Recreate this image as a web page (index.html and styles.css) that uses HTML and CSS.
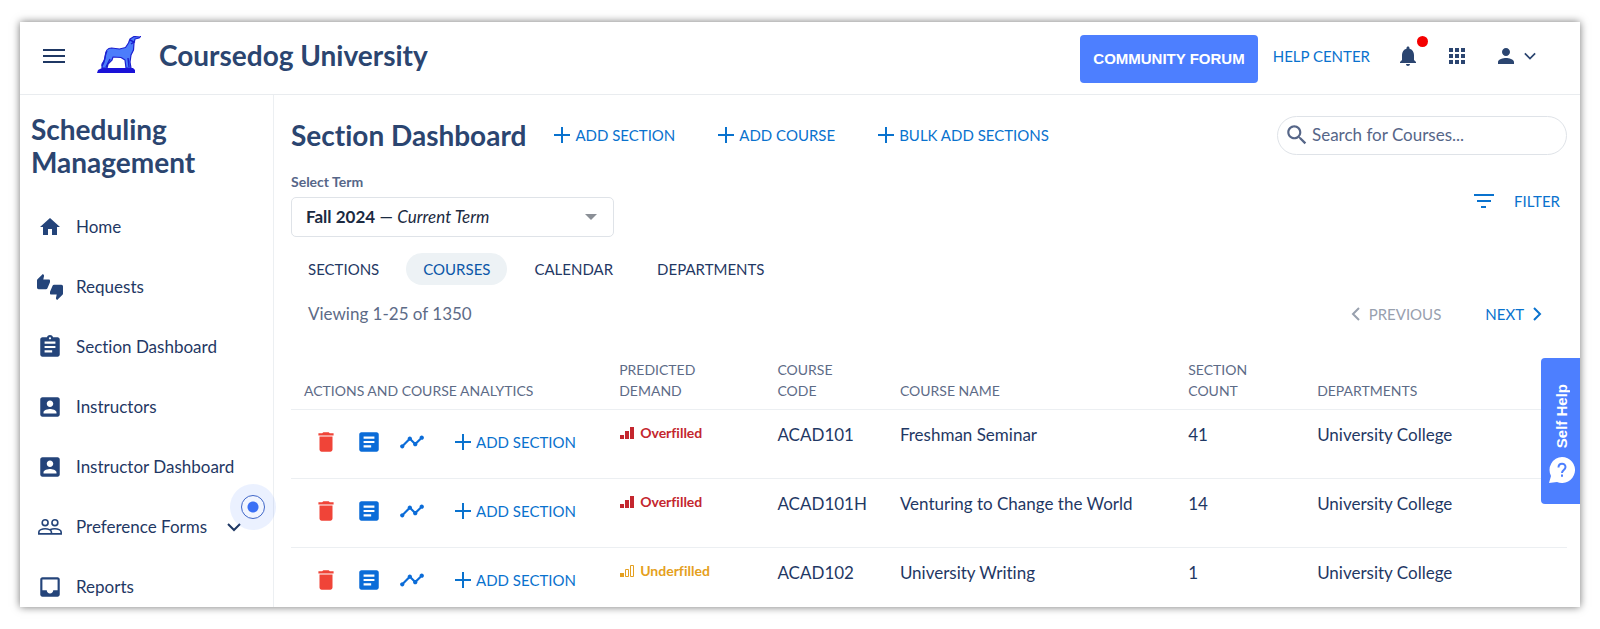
FILE: index.html
```html
<!DOCTYPE html>
<html lang="en">

<head>
    <meta charset="UTF-8">
    <meta name="viewport" content="width=device-width, initial-scale=1.0">
    <title>Coursedog University - Section Dashboard</title>
    <link rel="stylesheet" href="styles.css">
</head>

<body>
    <!-- Shared icons -->
    <svg class="sprite" aria-hidden="true">
        <symbol id="i-plus" viewBox="0 0 16 16"><path d="M8 0v16M0 8h16" fill="none" stroke="currentColor" stroke-width="2" /></symbol>
        <symbol id="i-down" viewBox="0 0 14 14"><path d="M1 4l6 6 6-6" fill="none" stroke="currentColor" stroke-width="2" /></symbol>
        <symbol id="i-trash" viewBox="0 0 24 24"><path d="M6 19c0 1.100.9 2 2 2h8c1.100 0 2-.9 2-2V7H6v12zM19 4h-3.500l-1-1h-5l-1 1H5v2h14V4z" /></symbol>
        <symbol id="i-article" viewBox="0 0 24 24"><path d="M19 3H5c-1.100 0-2 .9-2 2v14c0 1.100.9 2 2 2h14c1.100 0 2-.9 2-2V5c0-1.100-.9-2-2-2zm-5 14H7v-2h7v2zm3-4H7v-2h10v2zm0-4H7V7h10v2z" /></symbol>
        <symbol id="i-chart" viewBox="0 0 24 24"><path d="M23 8c0 1.100-.9 2-2 2-.18 0-.35-.02-.51-.07l-3.560 3.550c.05.16.07.34.07.52 0 1.100-.9 2-2 2s-2-.9-2-2c0-.18.02-.36.07-.52l-2.550-2.550c-.16.05-.34.07-.52.07s-.36-.02-.52-.07l-4.550 4.560c.05.16.07.33.07.51 0 1.100-.9 2-2 2s-2-.9-2-2 .9-2 2-2c.18 0 .35.02.51.07l4.560-4.550C8.020 9.360 8 9.180 8 9c0-1.100.9-2 2-2s2 .9 2 2c0 .18-.02.36-.07.52l2.550 2.550c.16-.05.34-.07.52-.07s.36.02.52.07l3.550-3.560C19.020 8.350 19 8.180 19 8c0-1.100.9-2 2-2s2 .9 2 2z" /></symbol>
        <symbol id="i-person-box" viewBox="0 0 24 24"><path d="M3 5v14c0 1.100.89 2 2 2h14c1.100 0 2-.9 2-2V5c0-1.100-.9-2-2-2H5c-1.110 0-2 .9-2 2zm12 4c0 1.660-1.340 3-3 3s-3-1.340-3-3 1.340-3 3-3 3 1.340 3 3zm-9 8c0-2 4-3.100 6-3.100s6 1.100 6 3.100v1H6v-1z" /></symbol>
        <symbol id="i-bars" viewBox="0 0 15 13"><path d="M0 8h4v4H0zM5 4h4v8H5zM10 0h4v12h-4z" /></symbol>
        <symbol id="i-bars-low" viewBox="0 0 15 13"><path d="M0 8h4v4H0z" /><path d="M5.500 4.500h3v7h-3zM10.500.5h3v11h-3z" fill="none" stroke="currentColor" /></symbol>
    </svg>

    <div class="window">
        <header class="topbar">
            <button class="icon-btn menu-btn" aria-label="Menu">
                <svg width="22" height="16" viewBox="0 0 22 16"><path d="M0 2h22M0 8h22M0 14h22" fill="none" stroke="currentColor" stroke-width="2" /></svg>
            </button>
            <svg class="logo" width="44" height="38" viewBox="0 0 44 38" aria-hidden="true">
                <path d="M0 37l1-3 4-2h31l2 2v3z" fill="#1a12d8" />
                <path d="M43 1l-6-.500-4 2.500-1.500 4-3 4.500-6 1.500-8-1c-4 0-6 3-6 7l-1 5-2.500 4L5 32h5l1-4 4-4 1-3 8 .500 4 2.500 1 8h5l-1-6 1-7 2.500-5 .500-7 1-4 4-1 2-2z" fill="#4c7dfb" stroke="#1c1fd0" stroke-width="1.200" stroke-linejoin="round" />
                <path d="M10 15c-3 5-1 9-5 15M13 23l-4 8M31 22l1 9M33 4l4 2-3 2" fill="none" stroke="#1c1fd0" stroke-width="1.400" />
            </svg>
            <div class="brand">Coursedog University</div>
            <div class="topbar-right">
                <button class="forum-btn">COMMUNITY FORUM</button>
                <a class="help-link" href="#">HELP CENTER</a>
                <button class="icon-btn bell" aria-label="Notifications">
                    <svg width="24" height="24" viewBox="0 0 24 24"><path d="M12 22c1.100 0 2-.9 2-2h-4c0 1.100.89 2 2 2zm6-6v-5c0-3.070-1.640-5.640-4.500-6.320V4c0-.83-.67-1.500-1.500-1.500s-1.500.67-1.500 1.500v.68C7.630 5.360 6 7.920 6 11v5l-2 2v1h16v-1l-2-2z" /></svg>
                    <span class="dot"></span>
                </button>
                <button class="icon-btn" aria-label="Apps">
                    <svg width="24" height="24" viewBox="0 0 24 24"><path d="M4 8h4V4H4v4zm6 12h4v-4h-4v4zm-6 0h4v-4H4v4zm0-6h4v-4H4v4zm6 0h4v-4h-4v4zm6-10v4h4V4h-4zm-6 4h4V4h-4v4zm6 6h4v-4h-4v4zm0 6h4v-4h-4v4z" /></svg>
                </button>
                <button class="icon-btn account" aria-label="Account">
                    <svg width="24" height="24" viewBox="0 0 24 24"><path d="M12 12c2.210 0 4-1.790 4-4s-1.790-4-4-4-4 1.790-4 4 1.790 4 4 4zm0 2c-2.670 0-8 1.340-8 4v2h16v-2c0-2.660-5.330-4-8-4z" /></svg>
                    <svg width="12" height="12"><use href="#i-down" /></svg>
                </button>
            </div>
        </header>

        <div class="layout">
            <nav class="sidebar">
                <h2>Scheduling Management</h2>
                <ul>
                    <li><a href="#"><svg width="24" height="24" viewBox="0 0 24 24"><path d="M10 20v-6h4v6h5v-8h3L12 3 2 12h3v8z" /></svg>Home</a></li>
                    <li><a href="#"><svg width="26" height="26" viewBox="0 0 24 24"><path d="M12 6c0-.550-.450-1-1-1H5.820l.660-3.180.020-.230c0-.310-.130-.590-.330-.8L5.380 0 .440 4.940C.170 5.210 0 5.590 0 6v6.500c0 .830.670 1.500 1.500 1.500h6.750c.620 0 1.150-.380 1.380-.910l2.260-5.290c.070-.170.110-.360.110-.550V6zm10.500 4h-6.750c-.620 0-1.150.380-1.380.910l-2.260 5.290c-.070.170-.110.360-.110.550V18c0 .550.450 1 1 1h5.180l-.660 3.180-.020.240c0 .310.130.590.330.8l.790.780 4.940-4.940c.270-.270.440-.650.440-1.060v-6.500c0-.830-.670-1.500-1.500-1.500z" /></svg>Requests</a></li>
                    <li><a href="#"><svg width="26" height="26" viewBox="0 0 24 24"><path d="M19 3h-4.180C14.400 1.840 13.300 1 12 1c-1.300 0-2.400.84-2.820 2H5c-1.100 0-2 .9-2 2v14c0 1.100.9 2 2 2h14c1.100 0 2-.9 2-2V5c0-1.100-.9-2-2-2zm-7 0c.55 0 1 .45 1 1s-.45 1-1 1-1-.45-1-1 .45-1 1-1zm2 14H7v-2h7v2zm3-4H7v-2h10v2zm0-4H7V7h10v2z" /></svg>Section Dashboard</a></li>
                    <li><a href="#"><svg width="26" height="26"><use href="#i-person-box" /></svg>Instructors</a></li>
                    <li><a href="#"><svg width="26" height="26"><use href="#i-person-box" /></svg>Instructor Dashboard</a></li>
                    <li>
                        <a href="#"><svg width="26" height="26" viewBox="0 0 24 24"><g fill="none" stroke="currentColor" stroke-width="1.500"><circle cx="7.500" cy="8" r="2.700" /><circle cx="16.500" cy="8" r="2.700" /><path d="M1.700 18.300v-1.800c0-1.700 3-2.900 5.800-2.900s5.800 1.200 5.800 2.900v1.800zM12 14.600c1.300-.700 3-1 4.500-1 2.800 0 5.800 1.200 5.800 2.900v1.800h-9" /></g></svg>Preference Forms<svg class="caret" width="14" height="14"><use href="#i-down" /></svg></a>
                        <span class="beacon"></span>
                    </li>
                    <li><a href="#"><svg width="26" height="26" viewBox="0 0 24 24"><path d="M19 3H4.990c-1.110 0-1.980.89-1.980 2L3 19c0 1.100.88 2 1.990 2H19c1.100 0 2-.9 2-2V5c0-1.110-.9-2-2-2zm0 12h-4c0 1.660-1.350 3-3 3s-3-1.340-3-3H4.990V5H19v10z" /></svg>Reports</a></li>
                </ul>
            </nav>

            <main class="content">
                <div class="title-row">
                    <h1>Section Dashboard</h1>
                    <button class="link-btn"><svg width="16" height="16"><use href="#i-plus" /></svg>ADD SECTION</button>
                    <button class="link-btn"><svg width="16" height="16"><use href="#i-plus" /></svg>ADD COURSE</button>
                    <button class="link-btn"><svg width="16" height="16"><use href="#i-plus" /></svg>BULK ADD SECTIONS</button>
                    <label class="search">
                        <svg width="26" height="26" viewBox="0 0 24 24"><path d="M15.500 14h-.79l-.28-.27C15.410 12.590 16 11.110 16 9.500 16 5.910 13.090 3 9.500 3S3 5.910 3 9.500 5.910 16 9.500 16c1.610 0 3.090-.59 4.230-1.570l.27.28v.79l5 4.990L20.490 19l-4.990-5zm-6 0C7.010 14 5 11.990 5 9.500S7.010 5 9.500 5 14 7.010 14 9.500 11.990 14 9.500 14z" /></svg>
                        <input type="search" placeholder="Search for Courses..." aria-label="Search for Courses">
                    </label>
                </div>

                <div class="term-row">
                    <div class="term">
                        <label for="term">Select Term</label>
                        <div class="term-select">
                            <select id="term">
                                <option>Fall 2024 — Current Term</option>
                            </select>
                            <span class="term-value" aria-hidden="true"><b>Fall 2024</b> — <i>Current Term</i></span>
                        </div>
                    </div>
                    <button class="link-btn filter-btn"><svg width="20" height="14" viewBox="0 0 20 14"><path d="M0 1h20M3 7h14M7 13h5" fill="none" stroke="currentColor" stroke-width="2" /></svg>FILTER</button>
                </div>

                <div class="tabs">
                    <button class="tab">SECTIONS</button>
                    <button class="tab active">COURSES</button>
                    <button class="tab">CALENDAR</button>
                    <button class="tab">DEPARTMENTS</button>
                </div>

                <div class="pager">
                    <span>Viewing 1-25 of 1350</span>
                    <div class="pager-btns">
                        <button class="link-btn" disabled><svg width="9" height="14" viewBox="0 0 9 14"><path d="M8 1L2 7l6 6" fill="none" stroke="currentColor" stroke-width="2" /></svg>PREVIOUS</button>
                        <button class="link-btn">NEXT<svg width="9" height="14" viewBox="0 0 9 14"><path d="M1 1l6 6-6 6" fill="none" stroke="currentColor" stroke-width="2" /></svg></button>
                    </div>
                </div>

                <table class="courses">
                    <thead>
                        <tr>
                            <th class="col-actions">ACTIONS AND COURSE ANALYTICS</th>
                            <th class="col-demand">PREDICTED<br>DEMAND</th>
                            <th class="col-code">COURSE<br>CODE</th>
                            <th class="col-name">COURSE NAME</th>
                            <th class="col-count">SECTION<br>COUNT</th>
                            <th>DEPARTMENTS</th>
                        </tr>
                    </thead>
                    <tbody>
                        <tr>
                            <td>
                                <div class="actions">
                                    <button class="icon-btn delete" aria-label="Delete"><svg width="26" height="26"><use href="#i-trash" /></svg></button>
                                    <button class="icon-btn" aria-label="Details"><svg width="26" height="26"><use href="#i-article" /></svg></button>
                                    <button class="icon-btn" aria-label="Analytics"><svg width="26" height="26"><use href="#i-chart" /></svg></button>
                                    <button class="link-btn"><svg width="16" height="16"><use href="#i-plus" /></svg>ADD SECTION</button>
                                </div>
                            </td>
                            <td><span class="demand over"><svg width="15" height="13"><use href="#i-bars" /></svg>Overfilled</span></td>
                            <td>ACAD101</td>
                            <td>Freshman Seminar</td>
                            <td>41</td>
                            <td>University College</td>
                        </tr>
                        <tr>
                            <td>
                                <div class="actions">
                                    <button class="icon-btn delete" aria-label="Delete"><svg width="26" height="26"><use href="#i-trash" /></svg></button>
                                    <button class="icon-btn" aria-label="Details"><svg width="26" height="26"><use href="#i-article" /></svg></button>
                                    <button class="icon-btn" aria-label="Analytics"><svg width="26" height="26"><use href="#i-chart" /></svg></button>
                                    <button class="link-btn"><svg width="16" height="16"><use href="#i-plus" /></svg>ADD SECTION</button>
                                </div>
                            </td>
                            <td><span class="demand over"><svg width="15" height="13"><use href="#i-bars" /></svg>Overfilled</span></td>
                            <td>ACAD101H</td>
                            <td>Venturing to Change the World</td>
                            <td>14</td>
                            <td>University College</td>
                        </tr>
                        <tr>
                            <td>
                                <div class="actions">
                                    <button class="icon-btn delete" aria-label="Delete"><svg width="26" height="26"><use href="#i-trash" /></svg></button>
                                    <button class="icon-btn" aria-label="Details"><svg width="26" height="26"><use href="#i-article" /></svg></button>
                                    <button class="icon-btn" aria-label="Analytics"><svg width="26" height="26"><use href="#i-chart" /></svg></button>
                                    <button class="link-btn"><svg width="16" height="16"><use href="#i-plus" /></svg>ADD SECTION</button>
                                </div>
                            </td>
                            <td><span class="demand under"><svg width="15" height="13"><use href="#i-bars-low" /></svg>Underfilled</span></td>
                            <td>ACAD102</td>
                            <td>University Writing</td>
                            <td>1</td>
                            <td>University College</td>
                        </tr>
                    </tbody>
                </table>
            </main>
        </div>

        <button class="self-help">
            <svg width="26" height="26" viewBox="0 0 26 26"><path d="M13 0a13 13 0 1 1-5 25L0 26l2-7A13 13 0 0 1 13 0z" fill="#fff" /><path d="M9.500 10.500c0-5 7-5 7-.500 0 3-3.500 3-3.500 6M13 17.500v2.200" fill="none" stroke="#4d7fff" stroke-width="2" /></svg>
            <span>Self Help</span>
        </button>
    </div>
</body>

</html>
```

FILE: styles.css
```css
* {
    margin: 0;
    padding: 0;
    box-sizing: border-box;
}

body {
    font-family: Lato, sans-serif;
    font-size: 17px;
    line-height: 24px;
    font-variant-ligatures: none;
    color: #1f3864;
    background-color: #fff;
    padding: 22px 20px;
    height: 100vh;
}

button,
input,
select {
    font: inherit;
    color: inherit;
    background: none;
    border: none;
}

a {
    color: inherit;
    text-decoration: none;
}

svg {
    display: block;
    fill: currentColor;
    flex-shrink: 0;
}

.sprite {
    position: absolute;
    width: 0;
    height: 0;
}

.window {
    position: relative;
    display: flex;
    flex-direction: column;
    height: 100%;
    overflow: hidden;
    background-color: #fff;
    box-shadow: 0 0 8px rgba(0, 0, 0, 0.55);
}

/* Top bar */
.topbar {
    display: flex;
    align-items: center;
    height: 73px;
    flex-shrink: 0;
    padding: 0 44px 5px 23px;
    border-bottom: 1px solid #e9ecef;
}

.icon-btn {
    display: flex;
    align-items: center;
}

.logo {
    margin: 0 18px 2px 32px;
}

.brand,
h1,
h2 {
    font-size: 28px;
    line-height: 33px;
    font-weight: 700;
    color: #2b4570;
}

.topbar-right {
    display: flex;
    align-items: center;
    margin-left: auto;
    color: #2b4570;
}

.forum-btn {
    height: 48px;
    padding: 0 13px;
    margin: 6px 15px 0 0;
    border-radius: 4px;
    background-color: #4d7fff;
    color: #fff;
    font-family: "Liberation Sans", sans-serif;
    font-size: 15px;
    font-weight: 700;
}

.help-link {
    font-size: 15px;
    color: #0972ce;
    margin-right: 26px;
}

.topbar-right .icon-btn {
    margin-right: 25px;
}

.topbar-right .account {
    gap: 6px;
    margin-right: 0;
}

.bell {
    position: relative;
}

.dot {
    position: absolute;
    top: -8px;
    right: -8px;
    width: 11px;
    height: 11px;
    border-radius: 50%;
    background-color: #f40000;
}

/* Sidebar */
.layout {
    display: flex;
    flex: 1;
    min-height: 0;
}

.sidebar {
    width: 254px;
    flex-shrink: 0;
    padding-top: 18px;
    border-right: 1px solid #eceff2;
}

h2 {
    padding: 0 11px;
    margin-bottom: 18px;
}

.sidebar ul {
    list-style: none;
}

.sidebar li {
    position: relative;
}

.sidebar a {
    display: grid;
    grid-template-columns: 26px auto 1fr;
    align-items: center;
    justify-items: center;
    column-gap: 13px;
    height: 60px;
    padding-left: 17px;
}

.sidebar a > svg:first-child {
    color: #24447a;
}

.sidebar .caret {
    justify-self: start;
    margin-left: 7px;
}

.beacon {
    position: absolute;
    top: -13px;
    right: -3px;
    width: 46px;
    height: 46px;
    border-radius: 50%;
    background-color: rgba(77, 127, 255, 0.11);
    display: flex;
    align-items: center;
    justify-content: center;
}

.beacon::before {
    content: "";
    width: 22px;
    height: 22px;
    border: 1px solid #3f66c8;
    border-radius: 50%;
    background: radial-gradient(circle, #3b70f5 5px, #f1f5ff 6px);
}

/* Main area */
.content {
    flex: 1;
    min-width: 0;
    padding: 16px 13px 0 17px;
}

.title-row {
    display: flex;
    align-items: center;
    height: 48px;
}

.link-btn {
    display: flex;
    align-items: center;
    gap: 5px;
    font-size: 15px;
    color: #0972ce;
    white-space: nowrap;
}

.title-row .link-btn {
    margin-right: 43px;
}

h1 {
    margin-right: 28px;
}

.search {
    display: flex;
    align-items: center;
    gap: 2px;
    width: 290px;
    height: 39px;
    margin-left: auto;
    padding: 0 10px 0 6px;
    border: 1px solid #dfe3e8;
    border-radius: 20px;
    color: #566688;
}

.search input {
    flex: 1;
    min-width: 0;
    outline: none;
}

.search input::placeholder {
    color: #566688;
    opacity: 1;
}

.term-row {
    display: flex;
    justify-content: space-between;
    align-items: flex-start;
    margin-top: 13px;
}

.term label {
    display: block;
    font-size: 14px;
    line-height: 20px;
    font-weight: 700;
    color: #566688;
    margin-bottom: 5px;
}

.term-select {
    position: relative;
    width: 323px;
}

.term-select select {
    width: 100%;
    height: 40px;
    appearance: none;
    border: 1px solid #dfe3e8;
    border-radius: 5px;
    color: transparent;
}

.term-select option {
    color: #1b2a41;
}

.term-select::after {
    content: "";
    position: absolute;
    top: 17px;
    right: 17px;
    border: 6px solid transparent;
    border-top-color: #8a8f96;
    border-bottom: none;
}

.term-value {
    position: absolute;
    top: 8px;
    left: 15px;
    color: #1b2a41;
    pointer-events: none;
}

.filter-btn {
    gap: 20px;
    margin-top: 17px;
    padding-right: 7px;
}

.tabs {
    display: flex;
    gap: 10px;
    margin-top: 16px;
}

.tab {
    height: 32px;
    padding: 0 17px;
    border-radius: 16px;
    font-size: 15px;
}

.tab.active {
    background-color: #edf2f5;
    color: #0b57a8;
}

.pager {
    display: flex;
    justify-content: space-between;
    align-items: center;
    padding: 0 25px 0 17px;
    margin-top: 17px;
    color: #5d6b87;
}

.pager-btns {
    display: flex;
    gap: 44px;
}

.pager .link-btn {
    gap: 9px;
}

.pager .link-btn:disabled {
    color: #98a0ae;
}

/* Courses table */
.courses {
    width: 100%;
    margin-top: 33px;
    border-collapse: collapse;
    table-layout: fixed;
    text-align: left;
}

.courses th {
    padding: 0 0 8px 13px;
    font-size: 14px;
    line-height: 21px;
    font-weight: 400;
    vertical-align: bottom;
    color: #5d6b87;
}

.courses td {
    height: 69px;
    padding: 13px 0 0 13px;
    vertical-align: top;
    white-space: nowrap;
}

.courses tr {
    border-bottom: 1px solid #eceff2;
}

.col-actions {
    width: 24.7%;
}

.col-demand {
    width: 12.4%;
}

.col-code {
    width: 9.6%;
}

.col-name {
    width: 22.6%;
}

.col-count {
    width: 10.1%;
}

.actions {
    display: flex;
    align-items: center;
    gap: 17px;
    padding: 6px 0 0 9px;
    color: #0b6cd8;
}

.actions .link-btn {
    margin-left: 13px;
}

.delete {
    color: #f04438;
}

.demand {
    display: flex;
    align-items: center;
    gap: 5px;
    padding-left: 1px;
    font-size: 14px;
    line-height: 20px;
    font-weight: 700;
}

.over {
    color: #c4262e;
}

.under {
    color: #e5a020;
}

/* Help tab on the right edge */
.self-help {
    position: absolute;
    top: 336px;
    right: 0;
    width: 39px;
    height: 146px;
    padding: 0 0 21px 3px;
    display: flex;
    flex-direction: column-reverse;
    align-items: center;
    gap: 9px;
    border-radius: 4px 0 0 4px;
    background-color: #4d7fff;
    color: #fff;
    font-family: "Liberation Sans", sans-serif;
    font-size: 15px;
    font-weight: 700;
}

.self-help span {
    writing-mode: vertical-rl;
    transform: rotate(180deg);
}
```
